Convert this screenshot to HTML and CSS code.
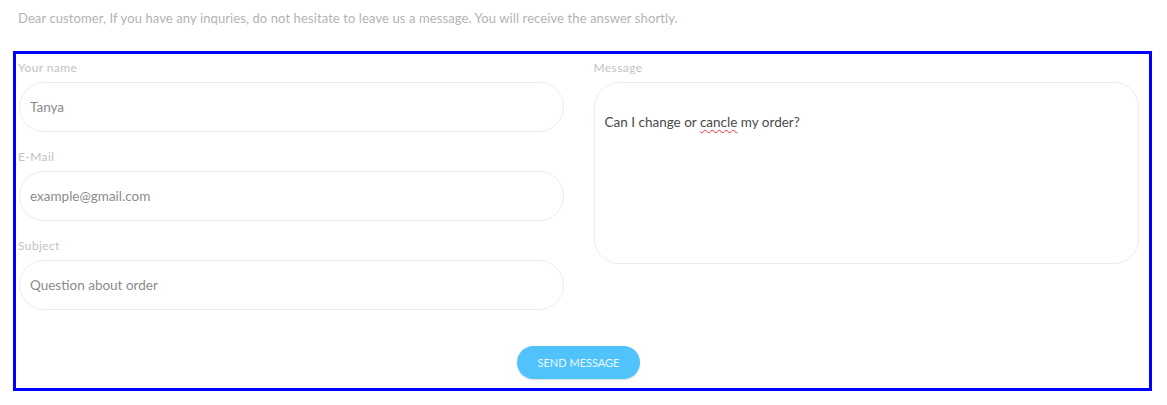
FILE: index.html
```html
<!DOCTYPE html>
<html lang="en">
<head>
<meta charset="utf-8">
<title>Contact</title>
<link rel="stylesheet" href="styles.css">
</head>
<body>
<div class="page">
  <p class="intro">Dear customer, If you have any inquries, do not hesitate to leave us a message. You will receive the answer shortly.</p>
  <form class="contact">
    <div class="grid">
      <div class="col">
        <div class="field">
          <label class="label">Your name</label>
          <div class="input">Tanya</div>
        </div>
        <div class="field">
          <label class="label">E-Mail</label>
          <div class="input">example@gmail.com</div>
        </div>
        <div class="field">
          <label class="label">Subject</label>
          <div class="input">Question about order</div>
        </div>
      </div>
      <div class="col">
        <div class="field">
          <label class="label">Message</label>
          <div class="textarea">Can I change or <span class="typo">cancle</span> my order?</div>
        </div>
      </div>
    </div>
    <div class="actions">
      <button type="button" class="send">SEND MESSAGE</button>
    </div>
  </form>
</div>
</body>
</html>
```
FILE: styles.css
```css
* { box-sizing: border-box; }
html, body { margin: 0; background: #fff; }
body { font-family: Lato, "Liberation Sans", sans-serif; }
.page { padding: 0 15px 0 13px; }
.intro {
  margin: 0;
  padding: 10px 0 0 5px;
  height: 51px;
  font-size: 13px;
  letter-spacing: 0.1px;
  line-height: 16px;
  color: #b3b3b3;
}
.contact {
  border: 3px solid #0000ff;
  padding: 6px 10px 9px 2px;
}
.grid {
  display: grid;
  grid-template-columns: 1fr 1fr;
  column-gap: 30px;
}
.field { display: flex; flex-direction: column; margin-bottom: 17px; }
.label {
  font-size: 12px;
  letter-spacing: 0.4px;
  line-height: 16px;
  color: #c2c2c2;
  margin-bottom: 6px;
}
.input {
  height: 50px;
  margin-left: 1px;
  border: 1px solid #ececec;
  border-radius: 25px;
  padding: 0 10px;
  display: flex;
  align-items: center;
  font-size: 13.5px;
  color: #8c8c8c;
}
.textarea {
  height: 182px;
  border: 1px solid #ececec;
  border-radius: 25px;
  padding: 30px 10px 0;
  font-size: 13.5px;
  line-height: 18px;
  color: #4a4a4a;
}
.typo {
  text-decoration: underline wavy #e33;
  text-decoration-thickness: 1px;
  text-underline-offset: 2px;
}
.actions {
  display: flex;
  justify-content: center;
  padding-top: 19px;
}
.send {
  width: 123px;
  height: 33px;
  border: none;
  border-radius: 17px;
  background: #51c3fb;
  color: #e9f7ff;
  font-family: Lato, "Liberation Sans", sans-serif;
  font-size: 11px;
  box-shadow: 0 1px 2px rgba(0,0,0,0.15);
  padding: 0;
}
```
